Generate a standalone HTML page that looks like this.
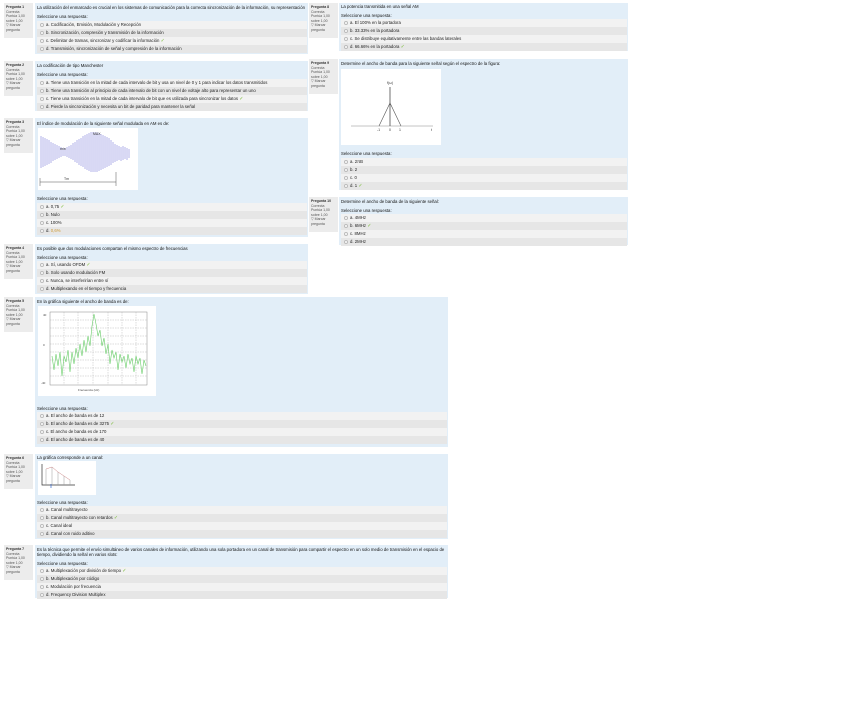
<!DOCTYPE html>
<html><head><meta charset="utf-8"><style>
*{margin:0;padding:0;box-sizing:border-box}
body{width:848px;height:726px;background:#fff;position:relative;overflow:hidden;font-family:"Liberation Sans",sans-serif;color:#333}
.q{position:absolute;background:#e2eef8}
.i{position:absolute;background:#ececec;width:29px;height:35px;font-size:3.5px;line-height:4.5px;padding:2px 2px;color:#555}
.i b{color:#333}
.t{position:absolute;font-size:4.3px;line-height:5px;white-space:nowrap;color:#111;font-weight:500}
.o{position:absolute;height:8px;line-height:8px;font-size:4.3px;white-space:nowrap;padding-left:3px;color:#222}
.a{background:#f2f2f2}.b{background:#e6e6e6}
.r{display:inline-block;width:4px;height:4px;border:0.6px solid #bbb;border-radius:50%;background:#fff;margin-right:2px;vertical-align:-0.5px}
.ck{color:#7b3;font-size:5px}
.img{position:absolute;background:#fff}
</style></head><body>

<!-- Q1 -->
<div class="i" style="left:4px;top:3px"><b>Pregunta 1</b><br>Correcta<br>Puntúa 1,00 sobre 1,00<br>▽ Marcar pregunta</div>
<div class="q" style="left:35px;top:3px;width:273px;height:51px"></div>
<div class="t" style="left:37px;top:5px">La utilización del enmarcado es crucial en los sistemas de comunicación para la correcta sincronización de la información, su representación</div>
<div class="t" style="left:37px;top:14px">Seleccione una respuesta:</div>
<div class="o a" style="left:37px;top:21px;width:270px"><span class="r"></span>a. Codificación, Emisión, Modulación y Recepción</div>
<div class="o b" style="left:37px;top:29px;width:270px"><span class="r"></span>b. Sincronización, compresión y transmisión de la información</div>
<div class="o a" style="left:37px;top:37px;width:270px"><span class="r"></span>c. Delimitar de tramas, sincronizar y codificar la información <span class="ck">✓</span></div>
<div class="o b" style="left:37px;top:45px;width:270px"><span class="r"></span>d. Transmisión, sincronización de señal y compresión de la información</div>

<!-- Q2 -->
<div class="i" style="left:4px;top:61px"><b>Pregunta 2</b><br>Correcta<br>Puntúa 1,00 sobre 1,00<br>▽ Marcar pregunta</div>
<div class="q" style="left:35px;top:61px;width:273px;height:50px"></div>
<div class="t" style="left:37px;top:63px">La codificación de tipo Manchester</div>
<div class="t" style="left:37px;top:72px">Seleccione una respuesta:</div>
<div class="o a" style="left:37px;top:79px;width:270px"><span class="r"></span>a. Tiene una transición en la mitad de cada intervalo de bit y usa un nivel de 0 y 1 para indicar los datos transmitidos</div>
<div class="o b" style="left:37px;top:87px;width:270px"><span class="r"></span>b. Tiene una transición al principio de cada intervalo de bit con un nivel de voltaje alto para representar un uno</div>
<div class="o a" style="left:37px;top:95px;width:270px"><span class="r"></span>c. Tiene una transición en la mitad de cada intervalo de bit que es utilizada para sincronizar los datos <span class="ck">✓</span></div>
<div class="o b" style="left:37px;top:103px;width:270px"><span class="r"></span>d. Pierde la sincronización y necesita un bit de paridad para mantener la señal</div>

<!-- Q3 -->
<div class="i" style="left:4px;top:118px"><b>Pregunta 3</b><br>Correcta<br>Puntúa 1,00 sobre 1,00<br>▽ Marcar pregunta</div>
<div class="q" style="left:35px;top:118px;width:273px;height:119px"></div>
<div class="t" style="left:37px;top:121px">El índice de modulación de la siguiente señal modulada en AM es de:</div>
<svg class="img" style="left:38px;top:128px" width="100" height="62" viewBox="0 0 100 62">
<g stroke="#5555cc" stroke-width="0.45">
<path d="M3 8V40M5 9V39M7 10V38M9 11V37M11 12V36M13 14V35M15 15V33M17 16V32M19 17V31M21 18V30M23 19V29M25 20V28M27 20V28M29 19V29M31 18V30M33 17V31M35 15V32M37 14V34M39 12V35M41 11V37M43 10V38M45 8V39M47 7V41M49 6V42M51 5V43M53 4V44M55 4V44M57 4V44M59 4V44M61 5V43M63 6V42M65 7V41M67 8V40M69 9V39M71 10V38M73 12V37M75 14V35M77 16V34M79 17V33M81 18V32M83 19V33M85 18V32M87 19V31M89 20V32M91 21V30"/>
</g>
<path d="M2 54H78M78 44V58M2 50V58" stroke="#555" stroke-width="0.5" fill="none"/>
<text x="26" y="52" font-size="3.5" fill="#333">Tm</text><text x="55" y="7" font-size="3.5" fill="#333">MAX</text><text x="22" y="22" font-size="3.5" fill="#333">min</text>
</svg>
<div class="t" style="left:37px;top:196px">Seleccione una respuesta:</div>
<div class="o a" style="left:37px;top:203px;width:270px"><span class="r"></span>a. 0,75 <span class="ck">✓</span></div>
<div class="o b" style="left:37px;top:211px;width:270px"><span class="r"></span>b. Nulo</div>
<div class="o a" style="left:37px;top:219px;width:270px"><span class="r"></span>c. 100%</div>
<div class="o b" style="left:37px;top:227px;width:270px"><span class="r"></span>d. <span style="color:#c93">0,6%</span></div>

<!-- Q4 -->
<div class="i" style="left:4px;top:244px"><b>Pregunta 4</b><br>Correcta<br>Puntúa 1,00 sobre 1,00<br>▽ Marcar pregunta</div>
<div class="q" style="left:35px;top:244px;width:273px;height:50px"></div>
<div class="t" style="left:37px;top:246px">Es posible que dos modulaciones compartan el mismo espectro de frecuencias</div>
<div class="t" style="left:37px;top:255px">Seleccione una respuesta:</div>
<div class="o a" style="left:37px;top:261px;width:270px"><span class="r"></span>a. Sí, usando OFDM <span class="ck">✓</span></div>
<div class="o b" style="left:37px;top:269px;width:270px"><span class="r"></span>b. Solo usando modulación FM</div>
<div class="o a" style="left:37px;top:277px;width:270px"><span class="r"></span>c. Nunca, se interferirían entre sí</div>
<div class="o b" style="left:37px;top:285px;width:270px"><span class="r"></span>d. Multiplexando en el tiempo y frecuencia</div>

<!-- Q5 big -->
<div class="i" style="left:4px;top:297px"><b>Pregunta 5</b><br>Correcta<br>Puntúa 1,00 sobre 1,00<br>▽ Marcar pregunta</div>
<div class="q" style="left:35px;top:297px;width:413px;height:150px"></div>
<div class="t" style="left:37px;top:299px">En la gráfica siguiente el ancho de banda es de:</div>
<svg class="img" style="left:38px;top:306px" width="118" height="90" viewBox="0 0 118 90">
<rect x="12" y="6" width="97" height="73" fill="none" stroke="#888" stroke-width="0.5"/>
<g stroke="#aaa" stroke-width="0.4" stroke-dasharray="1.5 1">
<path d="M12 14H109M12 22H109M12 30H109M12 38H109M12 46H109M12 54H109M12 62H109M12 70H109M26 6V79M40 6V79M55 6V79M70 6V79M84 6V79M98 6V79"/></g>
<path d="M14 50L16 64L18 48L20 60L22 46L24 70L26 50L28 56L30 44L32 66L34 46L36 58L38 42L40 52L42 38L44 50L46 34L48 46L50 30L52 40L54 20L56 8L58 18L60 30L62 24L64 40L66 32L68 48L70 38L72 58L74 44L76 52L78 46L80 64L82 48L84 56L86 50L88 62L90 48L92 58L94 52L96 66L98 50L100 58L102 52L104 68L106 54L108 60" fill="none" stroke="#6c6" stroke-width="0.6"/>
<g font-size="3" fill="#444"><text x="40" y="85">Frecuencia (Hz)</text><text x="5" y="10">40</text><text x="5" y="40">0</text><text x="3" y="78">-40</text></g>
</svg>
<div class="t" style="left:37px;top:406px">Seleccione una respuesta:</div>
<div class="o a" style="left:37px;top:412px;width:410px"><span class="r"></span>a. El ancho de banda es de 12</div>
<div class="o b" style="left:37px;top:420px;width:410px"><span class="r"></span>b. El ancho de banda es de 3275 <span class="ck">✓</span></div>
<div class="o a" style="left:37px;top:428px;width:410px"><span class="r"></span>c. El ancho de banda es de 170</div>
<div class="o b" style="left:37px;top:436px;width:410px"><span class="r"></span>d. El ancho de banda es de 40</div>

<!-- Q6 -->
<div class="i" style="left:4px;top:454px"><b>Pregunta 6</b><br>Correcta<br>Puntúa 1,00 sobre 1,00<br>▽ Marcar pregunta</div>
<div class="q" style="left:35px;top:454px;width:413px;height:85px"></div>
<div class="t" style="left:37px;top:455px">La gráfica corresponde a un canal:</div>
<svg class="img" style="left:38px;top:461px" width="58" height="34" viewBox="0 0 58 34">
<path d="M4 3V24H37" stroke="#333" stroke-width="0.7" fill="none"/>
<path d="M8 8V24M14 6V24M20 11V24M26 15V24M32 19V24" stroke="#999" stroke-width="0.5"/>
<path d="M8 8L14 6L20 11L26 15L32 19" stroke="#c88" stroke-width="0.5" fill="none"/>
<path d="M13 23V27" stroke="#36c" stroke-width="0.7"/>
</svg>
<div class="t" style="left:37px;top:500px">Seleccione una respuesta:</div>
<div class="o a" style="left:37px;top:506px;width:410px"><span class="r"></span>a. Canal multitrayecto</div>
<div class="o b" style="left:37px;top:514px;width:410px"><span class="r"></span>b. Canal multitrayecto con retardos <span class="ck">✓</span></div>
<div class="o a" style="left:37px;top:522px;width:410px"><span class="r"></span>c. Canal ideal</div>
<div class="o b" style="left:37px;top:530px;width:410px"><span class="r"></span>d. Canal con ruido aditivo</div>

<!-- Q7 -->
<div class="i" style="left:4px;top:545px"><b>Pregunta 7</b><br>Correcta<br>Puntúa 1,00 sobre 1,00<br>▽ Marcar pregunta</div>
<div class="q" style="left:35px;top:545px;width:413px;height:53px"></div>
<div class="t" style="left:37px;top:547px">Es la técnica que permite el envío simultáneo de varios canales de información, utilizando una sola portadora en un canal de transmisión para compartir el espectro en un solo medio de transmisión en el espacio de</div>
<div class="t" style="left:37px;top:552px">tiempo, dividiendo la señal en varios slots:</div>
<div class="t" style="left:37px;top:561px">Seleccione una respuesta:</div>
<div class="o a" style="left:37px;top:567px;width:410px"><span class="r"></span>a. Multiplexación por división de tiempo <span class="ck">✓</span></div>
<div class="o b" style="left:37px;top:575px;width:410px"><span class="r"></span>b. Multiplexación por código</div>
<div class="o a" style="left:37px;top:583px;width:410px"><span class="r"></span>c. Modulación por frecuencia</div>
<div class="o b" style="left:37px;top:591px;width:410px"><span class="r"></span>d. Frequency Division Multiplex</div>

<!-- Q8 right -->
<div class="i" style="left:309px;top:3px"><b>Pregunta 8</b><br>Correcta<br>Puntúa 1,00 sobre 1,00<br>▽ Marcar pregunta</div>
<div class="q" style="left:339px;top:3px;width:289px;height:48px"></div>
<div class="t" style="left:341px;top:4px">La potencia transmitida en una señal AM</div>
<div class="t" style="left:341px;top:13px">Seleccione una respuesta:</div>
<div class="o a" style="left:341px;top:19px;width:286px"><span class="r"></span>a. El 100% en la portadora</div>
<div class="o b" style="left:341px;top:27px;width:286px"><span class="r"></span>b. 33.33% en la portadora</div>
<div class="o a" style="left:341px;top:35px;width:286px"><span class="r"></span>c. Se distribuye equitativamente entre las bandas laterales</div>
<div class="o b" style="left:341px;top:43px;width:286px"><span class="r"></span>d. 66.66% en la portadora <span class="ck">✓</span></div>

<!-- Q9 -->
<div class="i" style="left:309px;top:59px"><b>Pregunta 9</b><br>Correcta<br>Puntúa 1,00 sobre 1,00<br>▽ Marcar pregunta</div>
<div class="q" style="left:339px;top:59px;width:289px;height:131px"></div>
<div class="t" style="left:341px;top:61px">Determine el ancho de banda para la siguiente señal según el espectro de la figura:</div>
<svg class="img" style="left:341px;top:69px" width="100" height="76" viewBox="0 0 100 76">
<path d="M10 57H92" stroke="#888" stroke-width="0.5"/>
<path d="M49 18V57" stroke="#333" stroke-width="0.7"/>
<path d="M38 57L49 34L60 57" stroke="#555" stroke-width="0.6" fill="none"/>
<g font-size="3.5" fill="#333"><text x="46" y="15">f(ω)</text><text x="36" y="62">-1</text><text x="48" y="62">0</text><text x="58" y="62">1</text><text x="90" y="62">t</text></g>
</svg>
<div class="t" style="left:341px;top:151px">Seleccione una respuesta:</div>
<div class="o a" style="left:341px;top:158px;width:286px"><span class="r"></span>a. 2πB</div>
<div class="o b" style="left:341px;top:166px;width:286px"><span class="r"></span>b. 2</div>
<div class="o a" style="left:341px;top:174px;width:286px"><span class="r"></span>c. 0</div>
<div class="o b" style="left:341px;top:182px;width:286px"><span class="r"></span>d. 1 <span class="ck">✓</span></div>

<!-- Q10 -->
<div class="i" style="left:309px;top:197px"><b>Pregunta 10</b><br>Correcta<br>Puntúa 1,00 sobre 1,00<br>▽ Marcar pregunta</div>
<div class="q" style="left:339px;top:197px;width:289px;height:48px"></div>
<div class="t" style="left:341px;top:199px">Determine el ancho de banda de la siguiente señal:</div>
<div class="t" style="left:341px;top:208px">Seleccione una respuesta:</div>
<div class="o a" style="left:341px;top:214px;width:286px"><span class="r"></span>a. 4MHz</div>
<div class="o b" style="left:341px;top:222px;width:286px"><span class="r"></span>b. 6MHz <span class="ck">✓</span></div>
<div class="o a" style="left:341px;top:230px;width:286px"><span class="r"></span>c. 8MHz</div>
<div class="o b" style="left:341px;top:238px;width:286px"><span class="r"></span>d. 2MHz</div>

</body></html>
